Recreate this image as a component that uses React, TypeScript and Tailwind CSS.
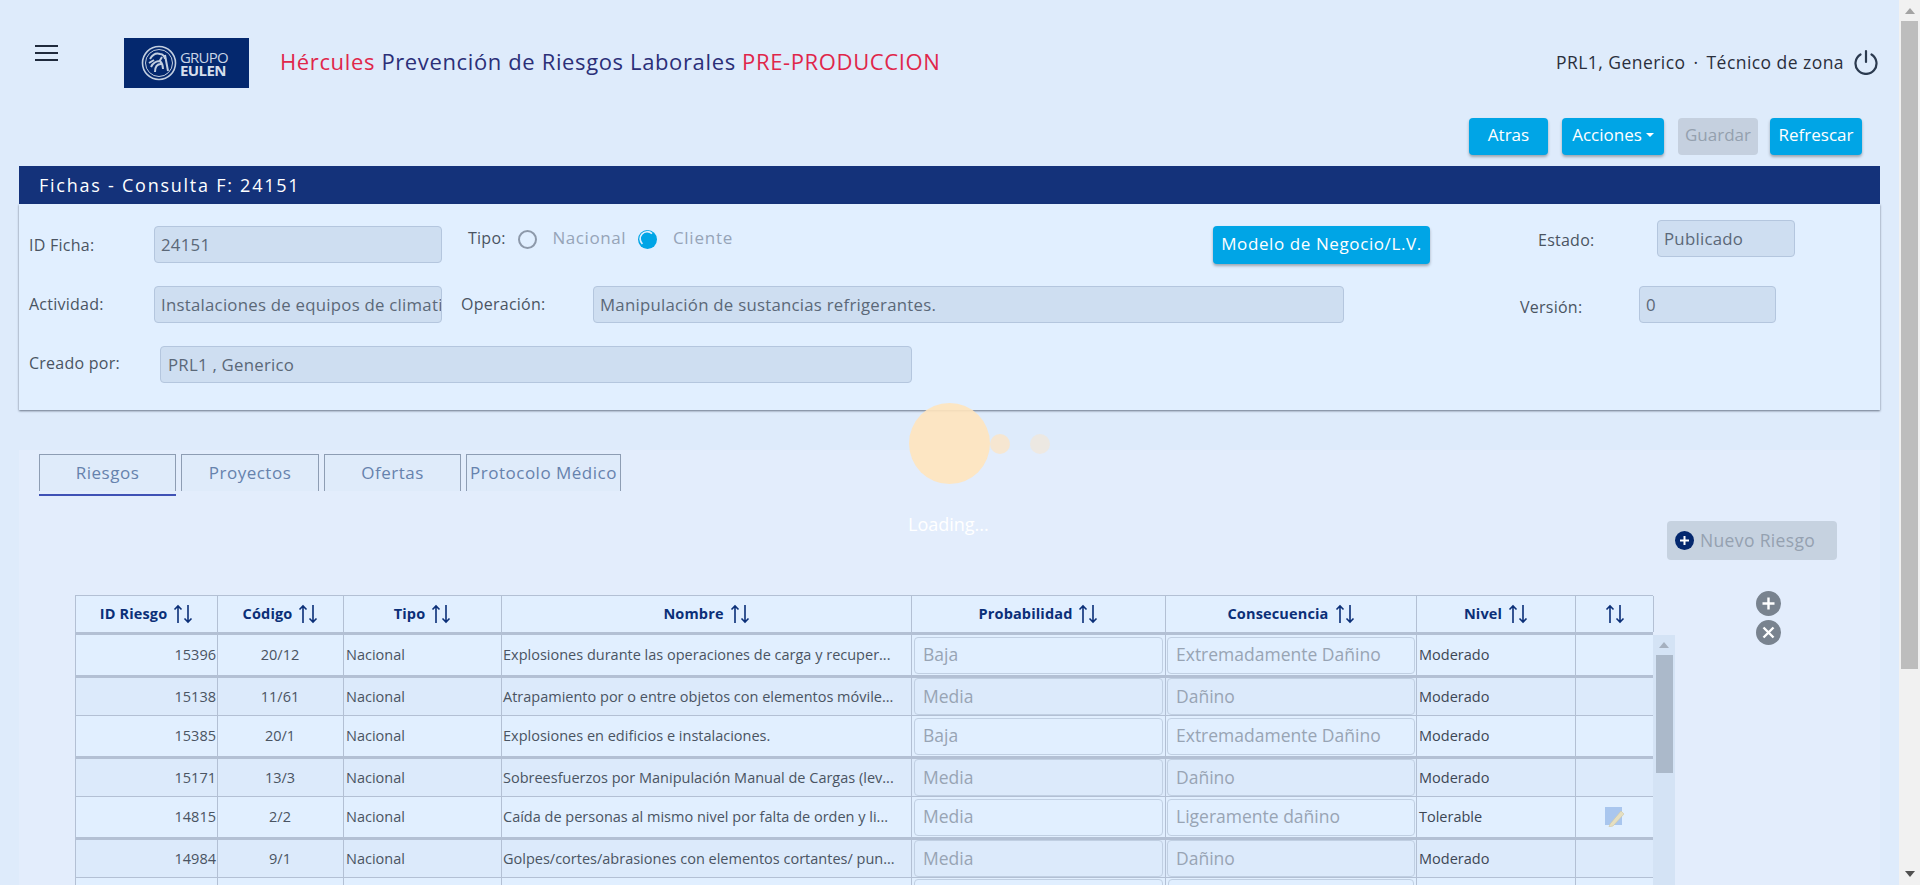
import React from 'react';

// ── Fichas consulta screen ──────────────────────────────────────────────────

const ROWS = [
  { id: '15396', code: '20/12', name: 'Explosiones durante las operaciones de carga y recuper...', prob: 'Baja', cons: 'Extremadamente Dañino', level: 'Moderado' },
  { id: '15138', code: '11/61', name: 'Atrapamiento por o entre objetos con elementos móvile...', prob: 'Media', cons: 'Dañino', level: 'Moderado' },
  { id: '15385', code: '20/1', name: 'Explosiones en edificios e instalaciones.', prob: 'Baja', cons: 'Extremadamente Dañino', level: 'Moderado' },
  { id: '15171', code: '13/3', name: 'Sobreesfuerzos por Manipulación Manual de Cargas (lev...', prob: 'Media', cons: 'Dañino', level: 'Moderado' },
  { id: '14815', code: '2/2', name: 'Caída de personas al mismo nivel por falta de orden y li...', prob: 'Media', cons: 'Ligeramente dañino', level: 'Tolerable', edit: true },
  { id: '14984', code: '9/1', name: 'Golpes/cortes/abrasiones con elementos cortantes/ pun...', prob: 'Media', cons: 'Dañino', level: 'Moderado' },
];

const HEADERS = ['ID Riesgo', 'Código', 'Tipo', 'Nombre', 'Probabilidad', 'Consecuencia', 'Nivel', ''];

const COLS = 'grid grid-cols-[142px_126px_158px_410px_254px_251px_159px_78px]';
const READONLY = 'h-[37px] rounded-[4px] border border-[#b4c6de] bg-[#cedef1] px-[6px] pt-[1px] flex items-center text-[16.8px] text-[#5b6878] overflow-hidden whitespace-nowrap';
const ACTION = 'h-[37px] pb-[3px] rounded-[4px] bg-[#00a5e6] text-white text-[17px] font-medium flex items-center justify-center shadow-[0_2px_3px_rgba(0,0,0,0.3)]';

const SortIcon = () => (
  <svg width="20" height="20" viewBox="0 0 20 20" fill="none" stroke="#0b2f78" strokeWidth="1.6" className="shrink-0">
    <path d="M5 19V2M1.5 5.5 5 2l3.5 3.5" />
    <path d="M15 1v17M11.5 14.5 15 18l3.5-3.5" />
  </svg>
);

const Logo = () => (
  <div className="w-[125px] h-[50px] bg-[#04286e] flex items-center pl-[17px] shrink-0">
    <svg width="36" height="36" viewBox="0 0 36 36" fill="none" stroke="#c3cfe0" className="shrink-0">
      <circle cx="18" cy="18" r="16.5" strokeWidth="1.6" />
      <circle cx="18" cy="18" r="13.5" strokeWidth="1" />
      <path d="M9 14c3-5 7-6 10-5 3 0 5 3 5 5M10 22c2-4 5-6 9-6 2 2 3 4 3 8M14 27c0-5 2-8 6-8M24 10l3 16M8 18l5-3M21 12l-3 5" strokeWidth="2" />
    </svg>
    <div className="ml-[3px] flex flex-col text-[#c9d5e6] leading-none">
      <span className="text-[15px] tracking-[-0.8px] leading-[14px]">GRUPO</span>
      <span className="text-[15px] font-bold tracking-[-0.6px] leading-[13px] text-[#d6dfec]">EULEN</span>
    </div>
  </div>
);

const Tab = ({ label, width, active }: { label: string; width: string; active?: boolean }) => (
  <div className={`${width} flex flex-col`}>
    <div className="h-[37px] border border-b-0 border-[#8e9db3] bg-[#dfebfa] flex items-center justify-center text-[17px] tracking-[0.5px] text-[#6682ad] whitespace-nowrap">
      {label}
    </div>
    {active && <div className="h-[2px] mt-[3px] bg-[#3f51b5]" />}
  </div>
);

const GridInput = ({ text }: { text: string }) => (
  <div className="h-[37px] w-full rounded-[4px] border border-[#c0cfe2] flex items-center px-[8px] pb-[1px] text-[17.5px] text-[#98a4b4] whitespace-nowrap overflow-hidden">
    {text}
  </div>
);

export default function App() {
  return (
    <div className="flex h-[885px] overflow-hidden bg-[#deebfb] font-['Open_Sans',sans-serif]">
      <div className="relative w-[1899px] shrink-0 flex flex-col">
        {/* top header */}
        <header className="flex items-center h-[50px] mt-[38px]">
          <div className="ml-[35px] w-[23px] flex flex-col gap-[5px] -mt-[20px]">
            <span className="h-[2px] bg-[#1f2a3c]" />
            <span className="h-[2px] bg-[#1f2a3c]" />
            <span className="h-[2px] bg-[#1f2a3c]" />
          </div>
          <div className="ml-[66px]"><Logo /></div>
          <div className="ml-[31px] -mt-[3px] text-[22px] tracking-[0.63px] text-[#2b2f78] whitespace-nowrap">
            <span className="text-[#e0264a]">Hércules</span> Prevención de Riesgos Laborales <span className="text-[#e0264a]">PRE-PRODUCCION</span>
          </div>
          <div className="ml-auto flex items-center mr-[20px] -mt-[2px]">
            <span className="text-[17.5px] tracking-[0.45px] text-[#2a2f3c] whitespace-nowrap">
              PRL1, Generico<span className="mx-[8px]">·</span>Técnico de zona
            </span>
            <svg width="26" height="26" viewBox="0 0 26 26" fill="none" stroke="#2b3a4f" strokeWidth="2.2" strokeLinecap="round" className="ml-[9px]">
              <path d="M13 2v11" />
              <path d="M7.5 5.5a10.5 10.5 0 1 0 11 0" />
            </svg>
          </div>
        </header>

        {/* toolbar */}
        <div className="flex justify-end mt-[30px] mr-[37px]">
          <div className={`${ACTION} w-[79px]`}>Atras</div>
          <div className={`${ACTION} w-[102px] ml-[14px]`}>
            Acciones
            <span className="ml-[4px] border-x-[4px] border-x-transparent border-t-[4px] border-t-white" />
          </div>
          <div className="h-[37px] w-[80px] ml-[14px] pb-[3px] rounded-[4px] bg-[#c5d0df] text-[#94a0ae] text-[17px] font-medium flex items-center justify-center">Guardar</div>
          <div className={`${ACTION} w-[92px] ml-[12px]`}>Refrescar</div>
        </div>

        {/* ficha card */}
        <div className="mt-[11px] ml-[19px] w-[1861px] shrink-0">
          <div className="h-[38px] bg-[#14327a] text-white text-[18px] tracking-[1.75px] flex items-center pl-[20px]">
            Fichas - Consulta F: 24151
          </div>
          <div className="h-[206px] bg-[#e1efff] pt-[16px] pl-[10px] text-[16px] tracking-[0.25px] text-[#4a5462] shadow-[0_1px_2px_rgba(40,50,70,0.65)]">
            <div className="flex items-start h-[66px]">
              <span className="w-[125px] mt-[13px]">ID Ficha:</span>
              <div className={`${READONLY} w-[288px] mt-[6px]`}>24151</div>
              <div className="ml-[26px] mt-[9px] flex items-center h-[18px] w-[265px]">
                <span className="w-[50px]">Tipo:</span>
                <span className="w-[19px] h-[19px] mt-[2px] rounded-full border-2 border-[#8d99aa]" />
                <span className="ml-[16px] w-[86px] text-[17px] tracking-[0.55px] text-[#96a4b8]">Nacional</span>
                <svg width="19" height="19" viewBox="0 0 19 19" className="mt-[2px] shrink-0">
                  <circle cx="9.5" cy="9.5" r="9.5" fill="#00a5e6" />
                  <path d="M14 3.6A7 7 0 0 0 4.4 14" fill="none" stroke="#e1efff" strokeWidth="1.7" />
                </svg>
                <span className="ml-[16px] text-[17px] tracking-[0.75px] text-[#96a4b8]">Cliente</span>
              </div>
              <div className={`${ACTION} w-[217px] h-[38px] mt-[6px] ml-[480px] tracking-[0.6px] pb-[0px]`}>Modelo de Negocio/L.V.</div>
              <span className="ml-[108px] w-[119px] mt-[8px]">Estado:</span>
              <div className={`${READONLY} w-[138px] text-[#3c4654]`}>Publicado</div>
            </div>
            <div className="flex items-start h-[60px]">
              <span className="w-[125px] mt-[6px]">Actividad:</span>
              <div className={`${READONLY} w-[288px]`}>Instalaciones de equipos de climati</div>
              <span className="ml-[19px] w-[132px] mt-[6px]">Operación:</span>
              <div className={`${READONLY} w-[751px]`}>Manipulación de sustancias refrigerantes.</div>
              <span className="ml-[176px] w-[119px] mt-[9px]">Versión:</span>
              <div className={`${READONLY} w-[137px]`}>0</div>
            </div>
            <div className="flex items-start">
              <span className="w-[131px] mt-[5px]">Creado por:</span>
              <div className={`${READONLY} w-[752px] pl-[7px]`}>PRL1 , Generico</div>
            </div>
          </div>
        </div>

        {/* tabs panel */}
        <div className="mt-[40px] ml-[19px] w-[1861px] flex-1 bg-[#e3edfc] pt-[4px] pl-[20px] overflow-hidden">
          <div className="flex gap-[5px] h-[42px]">
            <Tab label="Riesgos" width="w-[137px]" active />
            <Tab label="Proyectos" width="w-[138px]" />
            <Tab label="Ofertas" width="w-[137px]" />
            <Tab label="Protocolo Médico" width="w-[155px]" />
          </div>

          <div className="flex justify-end mt-[25px] pr-[43px]">
            <div className="w-[170px] h-[39px] rounded-[4px] bg-[#c6d2e0] flex items-center pl-[8px] text-[17.5px] tracking-[0.35px] text-[#95a1b0]">
              <span className="w-[19px] h-[19px] rounded-full bg-[#04286e] text-white flex items-center justify-center mr-[6px]">
                <svg width="11" height="11" viewBox="0 0 11 11" stroke="#fff" strokeWidth="2"><path d="M5.5 1v9M1 5.5h9" /></svg>
              </span>
              Nuevo Riesgo
            </div>
          </div>

          <div className="flex mt-[35px] ml-[36px] items-start">
            <div className="w-[1600px] shrink-0">
              <div className={`${COLS} w-[1578px] h-[40px] border-t border-l border-b-[3px] border-[#b3c0d4] bg-[#e1efff] text-[14.5px] font-bold tracking-[0.15px] text-[#0b2f78]`}>
                {HEADERS.map((h, i) => (
                  <div key={i} className="flex items-center justify-center gap-[6px] border-r border-[#b3c0d4]">
                    {h && <span>{h}</span>}
                    <SortIcon />
                  </div>
                ))}
              </div>
              <div className="flex">
                <div className="w-[1578px] shrink-0">
                  {ROWS.map((r, i) => {
                    const even = i % 2 === 1;
                    return (
                      <div
                        key={r.id}
                        className={even
                          ? `${COLS} h-[41px] border-t-[3px] border-b border-l border-[#b3c0d4] bg-[#dceafb] text-[14.5px] text-[#4a5462]`
                          : `${COLS} h-[40px] border-l border-[#b3c0d4] bg-[#e1efff] text-[14.5px] text-[#4a5462]`}
                      >
                        <div className="flex items-center justify-end pr-[1px] border-r border-[#b3c0d4]">{r.id}</div>
                        <div className="flex items-center justify-center border-r border-[#b3c0d4] pr-[1px]">{r.code}</div>
                        <div className="flex items-center pl-[2px] border-r border-[#b3c0d4]">Nacional</div>
                        <div className="flex items-center pl-[1px] border-r border-[#b3c0d4] whitespace-nowrap overflow-hidden">{r.name}</div>
                        <div className="flex items-center px-[2px] border-r border-[#b3c0d4]"><GridInput text={r.prob} /></div>
                        <div className="flex items-center pl-[1px] pr-[1px] border-r border-[#b3c0d4]"><GridInput text={r.cons} /></div>
                        <div className="flex items-center pl-[2px] border-r border-[#b3c0d4] text-[#3c4654]">{r.level}</div>
                        <div className="flex items-center justify-center border-r border-[#b3c0d4]">
                          {r.edit && (
                            <svg width="20" height="20" viewBox="0 0 20 20">
                              <rect x="0" y="0" width="17" height="18" fill="#a9c6ee" />
                              <path d="M5 17 L16 4 L19 7 L8 19 L4 20 Z" fill="#e6dfc0" stroke="#cfc7a6" strokeWidth="0.6" />
                            </svg>
                          )}
                        </div>
                      </div>
                    );
                  })}
                  <div className={`${COLS} h-[41px] border-t-0 border-l border-[#b3c0d4] bg-[#e1efff]`}>
                    {HEADERS.map((_, i) => (
                      <div key={i} className="flex items-start pt-[1px] px-[2px] border-r border-[#b3c0d4]">
                        {(i === 4 || i === 5) && <div className="h-[37px] w-full rounded-[4px] border border-[#c0cfe2]" />}
                      </div>
                    ))}
                  </div>
                </div>
                <div className="w-[22px] shrink-0 bg-[#d4e3f5] flex flex-col items-center pt-[7px]">
                  <span className="border-x-[5px] border-x-transparent border-b-[6px] border-b-[#a5b0bf]" />
                  <div className="w-[17px] h-[118px] mt-[7px] bg-[#abb9ca]" />
                </div>
              </div>
            </div>
            <div className="ml-[81px] -mt-[4px] flex flex-col gap-[4px]">
              <span className="w-[25px] h-[25px] rounded-full bg-[#79838f] flex items-center justify-center">
                <svg width="15" height="15" viewBox="0 0 15 15" stroke="#fff" strokeWidth="2.4"><path d="M7.5 1.5v12M1.5 7.5h12" /></svg>
              </span>
              <span className="w-[25px] h-[25px] rounded-full bg-[#79838f] flex items-center justify-center">
                <svg width="15" height="15" viewBox="0 0 15 15" stroke="#fff" strokeWidth="2.4"><path d="M2.5 2.5l10 10M12.5 2.5l-10 10" /></svg>
              </span>
            </div>
          </div>
        </div>

        {/* loading overlay */}
        <div className="absolute left-[909px] top-[403px] flex flex-col pointer-events-none">
          <div className="flex items-center">
            <span className="w-[81px] h-[81px] rounded-full bg-[#ffe4bc] opacity-90" />
            <span className="w-[20px] h-[20px] rounded-full bg-[#fde4c3] opacity-[0.75]" />
            <span className="w-[20px] h-[20px] ml-[20px] rounded-full bg-[#fde4c3] opacity-[0.45]" />
          </div>
          <span className="mt-[27px] -ml-[1px] text-[18px] font-medium text-white">Loading...</span>
        </div>
      </div>

      {/* page scrollbar */}
      <div className="w-[21px] shrink-0 bg-[#f1f1f1] flex flex-col items-center pt-[8px] relative">
        <span className="border-x-[5px] border-x-transparent border-b-[6px] border-b-[#a3a3a3]" />
        <div className="w-[17px] h-[648px] mt-[7px] bg-[#bdbdbd]" />
        <span className="mt-auto mb-[8px] border-x-[5px] border-x-transparent border-t-[6px] border-t-[#505050]" />
      </div>
    </div>
  );
}
